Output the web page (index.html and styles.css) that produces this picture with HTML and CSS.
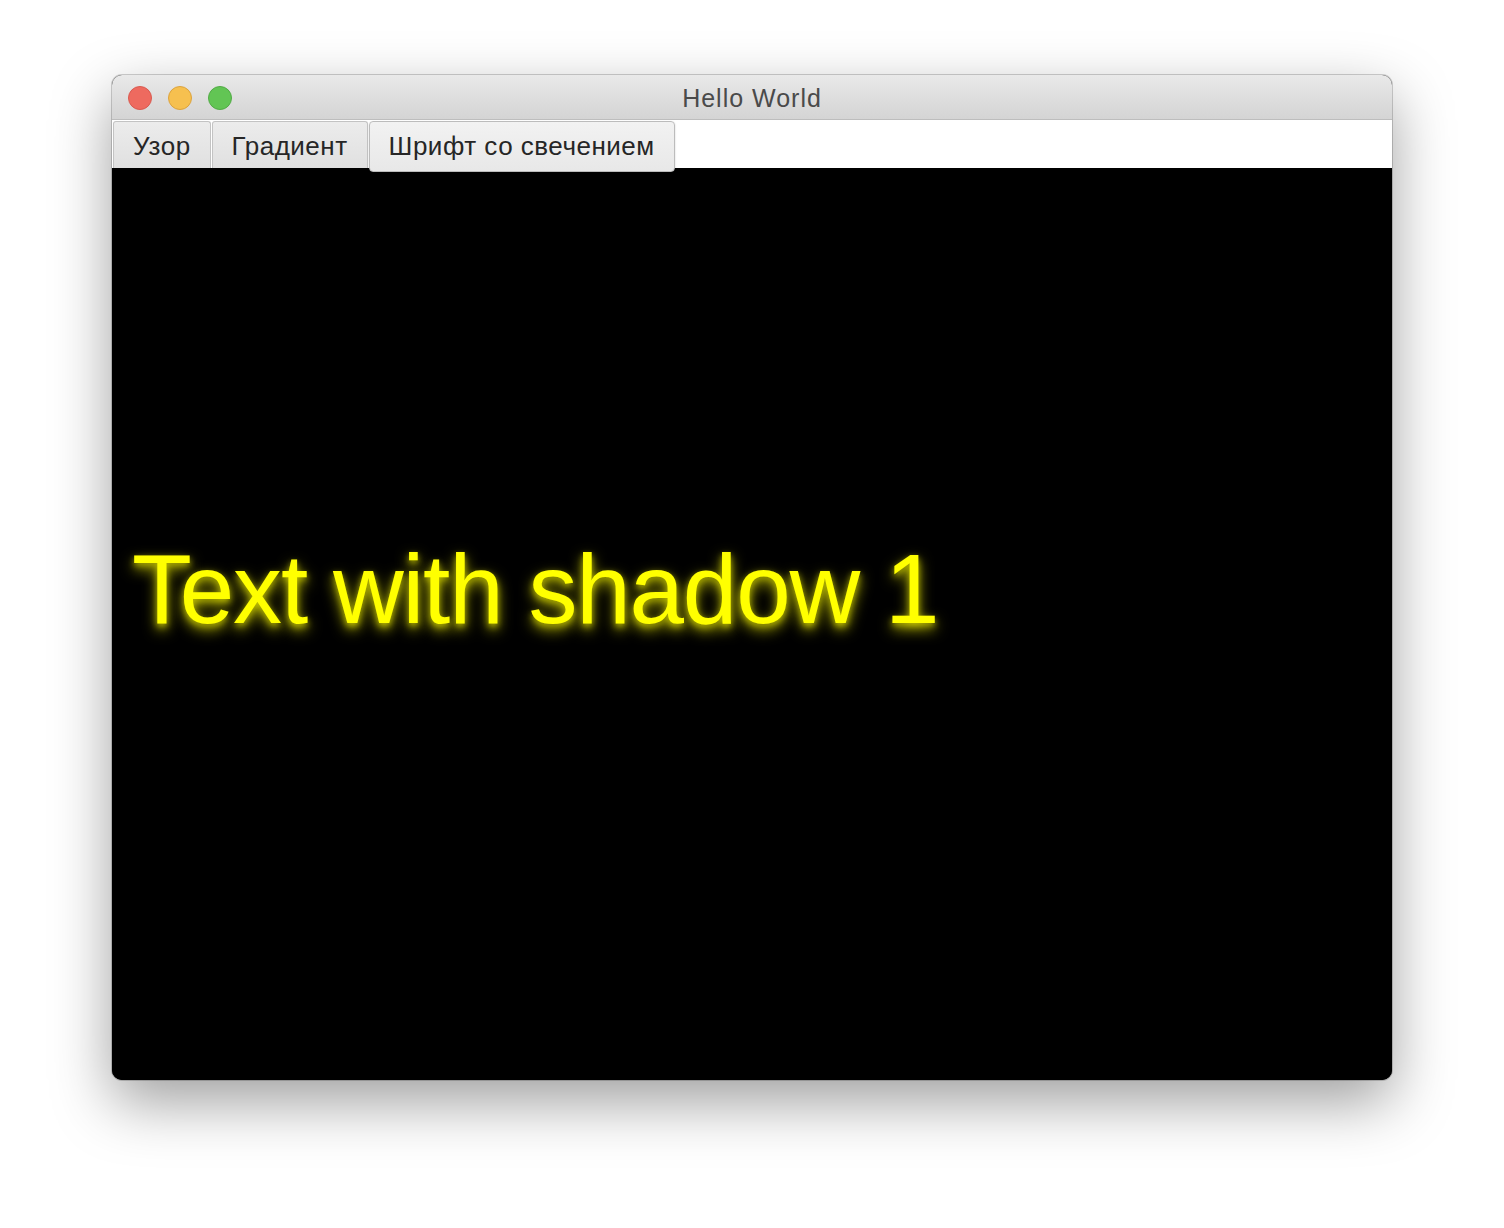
FILE: index.html
```html
<!DOCTYPE html>
<html>
<head>
<meta charset="utf-8">
<link rel="stylesheet" href="styles.css">
</head>
<body>
<div class="window">
  <div class="titlebar">
    <div class="lights">
      <span class="light red"></span>
      <span class="light yellow"></span>
      <span class="light green"></span>
    </div>
    <div class="title">Hello World</div>
  </div>
  <div class="tabbar">
    <div class="tab">Узор</div>
    <div class="tab">Градиент</div>
    <div class="tab selected">Шрифт со свечением</div>
  </div>
  <div class="content">
    <div class="glow">Text with shadow 1</div>
  </div>
</div>
</body>
</html>
```
FILE: styles.css
```css
html, body {
  margin: 0;
  padding: 0;
  background: #ffffff;
  width: 1504px;
  height: 1228px;
  overflow: hidden;
}
.window {
  margin: 75px 0 0 112px;
  width: 1280px;
  height: 1005px;
  border-radius: 10px;
  overflow: hidden;
  display: flex;
  flex-direction: column;
  box-shadow: 0 0 0 1px rgba(0,0,0,0.18), 0 22px 60px rgba(0,0,0,0.38);
  background: #000;
}
.titlebar {
  height: 44px;
  flex: none;
  background: linear-gradient(#e9e9e9, #d4d4d4);
  border-bottom: 1px solid #bdbdbd;
  display: flex;
  align-items: center;
  position: relative;
}
.lights {
  display: flex;
  gap: 16px;
  padding-left: 16px;
  padding-top: 2px;
}
.light {
  width: 24px;
  height: 24px;
  border-radius: 50%;
  box-sizing: border-box;
}
.red { background: #ee6a5f; border: 1px solid #d95a50; }
.yellow { background: #f6c04f; border: 1px solid #dca33e; }
.green { background: #62c554; border: 1px solid #52ab46; }
.title {
  position: absolute;
  left: 0;
  right: 0;
  top: 0;
  bottom: 0;
  display: flex;
  align-items: center;
  justify-content: center;
  font-family: "Liberation Sans", Arial, sans-serif;
  font-size: 25px;
  letter-spacing: 1px;
  color: #4a4a4a;
  padding-top: 2px;
}
.tabbar {
  height: 48px;
  flex: none;
  background: #ffffff;
  display: flex;
  align-items: flex-start;
  padding-top: 1px;
  box-sizing: border-box;
  position: relative;
  z-index: 1;
}
.tab {
  height: 47px;
  box-sizing: border-box;
  padding: 3px 19px 0 19px;
  margin-left: 1px;
  display: flex;
  align-items: center;
  font-family: "Liberation Sans", Arial, sans-serif;
  font-size: 26px;
  letter-spacing: 0.5px;
  color: #262626;
  background: linear-gradient(#ececec, #e0e0e0);
  border: 1px solid #c3c3c3;
  border-bottom: none;
  border-radius: 3px 3px 0 0;
}
.tab.selected {
  height: 51px;
  background: linear-gradient(#f2f2f2, #e8e8e8);
  border: 1px solid #bcbcbc;
  border-radius: 4px;
  box-shadow: 0 1px 2px rgba(0,0,0,0.2);
  padding: 3px 19px 4px 19px;
}
.content {
  flex: 1;
  background: #000000;
  display: flex;
  align-items: center;
  padding-left: 20px;
  padding-bottom: 70px;
}
.glow {
  font-family: "Liberation Sans", Arial, sans-serif;
  font-size: 98px;
  letter-spacing: -1.2px;
  color: #ffff00;
  text-shadow: 0 6px 14px rgba(255,255,0,0.7), 0 3px 6px rgba(255,255,0,0.55);
  line-height: 1;
}
```
